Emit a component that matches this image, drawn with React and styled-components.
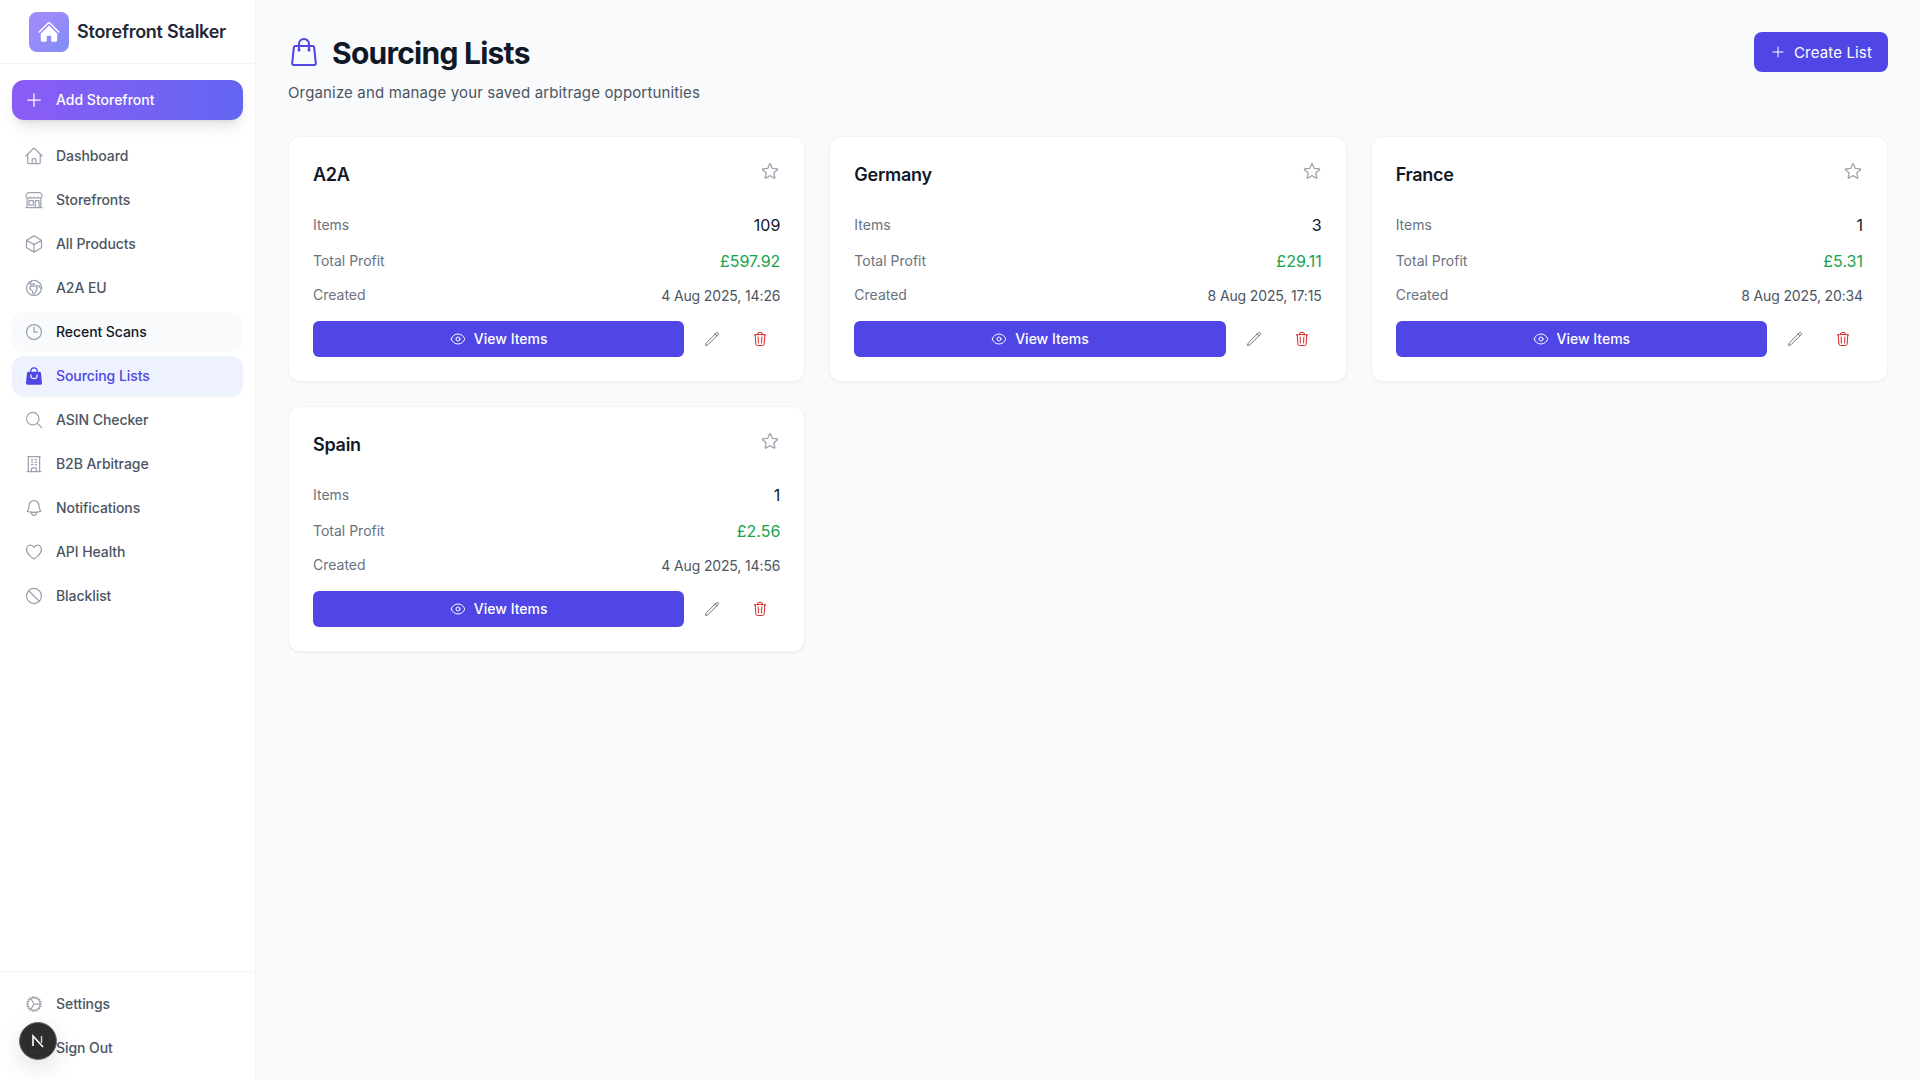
import React from "react";
import styled, { createGlobalStyle } from "styled-components";
import {
  HiHome,
  HiShoppingBag,
  HiOutlineHome,
  HiOutlineBuildingStorefront,
  HiOutlineCube,
  HiOutlineGlobeEuropeAfrica,
  HiOutlineClock,
  HiOutlineMagnifyingGlass,
  HiOutlineBuildingOffice,
  HiOutlineBell,
  HiOutlineHeart,
  HiOutlineNoSymbol,
  HiOutlineCog,
  HiOutlineArrowRightOnRectangle,
  HiOutlineShoppingBag,
  HiOutlineStar,
  HiOutlineEye,
  HiOutlinePencil,
  HiOutlineTrash,
  HiOutlinePlus,
} from "react-icons/hi2";

const GlobalStyle = createGlobalStyle`
  * { box-sizing: border-box; }
  html, body { margin: 0; height: 100%; }
  body {
    font-family: Inter, "Liberation Sans", sans-serif;
    background: #f9fafb;
    color: #111827;
  }
`;

const Layout = styled.div`
  display: flex;
  height: 100vh;
  overflow: hidden;
`;

const Sidebar = styled.aside`
  width: 256px;
  flex-shrink: 0;
  display: flex;
  flex-direction: column;
  background: #fff;
  border-right: 1px solid #f3f4f6;
`;

const Brand = styled.div`
  height: 64px;
  display: flex;
  align-items: center;
  justify-content: center;
  gap: 8px;
  border-bottom: 1px solid #f3f4f6;
`;

const BrandMark = styled.div`
  width: 40px;
  height: 40px;
  border-radius: 8px;
  display: flex;
  align-items: center;
  justify-content: center;
  color: #fff;
  font-size: 24px;
  background: linear-gradient(135deg, #a78bfa, #818cf8);
`;

const BrandName = styled.span`
  font-size: 18px;
  font-weight: 600;
  letter-spacing: -0.015em;
  color: #1f2937;
`;

const AddButton = styled.button`
  margin: 16px 12px 0;
  height: 40px;
  display: flex;
  align-items: center;
  gap: 12px;
  padding: 0 12px;
  border: none;
  border-radius: 12px;
  color: #fff;
  font: 450 14px Inter, sans-serif;
  background: linear-gradient(90deg, #8b5cf6, #6366f1);
  box-shadow: 0 10px 15px -3px rgba(0, 0, 0, 0.1), 0 4px 6px -4px rgba(0, 0, 0, 0.1);
  svg { font-size: 20px; }
`;

const NavList = styled.nav`
  flex: 1;
  display: flex;
  flex-direction: column;
  gap: 4px;
  padding: 16px 12px;
`;

const NavItem = styled.a`
  height: 40px;
  display: flex;
  align-items: center;
  gap: 12px;
  padding: 0 12px;
  border-radius: 12px;
  font-size: 14px;
  font-weight: 450;
  letter-spacing: -0.005em;
  color: ${(p) => (p.$active ? "#4f46e5" : p.$hover ? "#111827" : "#4b5563")};
  background: ${(p) => (p.$active ? "#eef2ff" : p.$hover ? "#f9fafb" : "transparent")};
  box-shadow: ${(p) => (p.$active ? "0 1px 2px rgba(0, 0, 0, 0.05)" : "none")};
  svg {
    font-size: 20px;
    flex-shrink: 0;
    color: ${(p) => (p.$active ? "#4f46e5" : "#9ca3af")};
  }
`;

const Label = styled.span`
  padding-bottom: 2px;
`;

const SidebarFoot = styled.div`
  display: flex;
  flex-direction: column;
  gap: 4px;
  padding: 12px;
  border-top: 1px solid #f3f4f6;
`;

const DevBadge = styled.div`
  position: fixed;
  left: 19px;
  bottom: 20px;
  width: 38px;
  height: 38px;
  border-radius: 50%;
  background: rgba(28, 28, 28, 0.92);
  border: 1px solid #6b6b6b;
  display: flex;
  align-items: center;
  justify-content: center;
  box-shadow: 0 8px 24px rgba(0, 0, 0, 0.12);
`;

const Main = styled.main`
  flex: 1;
  min-width: 0;
  padding: 32px;
`;

const PageHead = styled.header`
  display: flex;
  align-items: flex-start;
  justify-content: space-between;
  height: 72px;
  margin-bottom: 32px;
`;

const TitleRow = styled.div`
  display: flex;
  align-items: center;
  gap: 12px;
  color: #4f46e5;
  svg { font-size: 32px; }
`;

const Title = styled.h1`
  margin: 1px 0 -1px;
  font-size: 30px;
  line-height: 40px;
  font-weight: 700;
  letter-spacing: -0.025em;
  color: #111827;
`;

const Subtitle = styled.p`
  margin: 9px 0 0;
  font-size: 15px;
  line-height: 24px;
  letter-spacing: 0.15px;
  color: #4b5563;
`;

const CreateButton = styled.button`
  height: 40px;
  display: flex;
  align-items: center;
  gap: 8px;
  padding: 0 16px;
  border: none;
  border-radius: 8px;
  background: #4f46e5;
  color: #fff;
  font: 400 15px Inter, sans-serif;
  letter-spacing: 0.15px;
  svg { font-size: 16px; }
`;

const Grid = styled.div`
  display: grid;
  grid-template-columns: repeat(3, 1fr);
  gap: 24px;
  align-items: start;
`;

const Card = styled.article`
  height: 246px;
  padding: 24px;
  background: #fff;
  border: 1px solid #f3f4f6;
  border-radius: 12px;
  box-shadow: 0 1px 2px rgba(0, 0, 0, 0.05);
`;

const CardHead = styled.div`
  display: flex;
  justify-content: space-between;
  height: 40px;
  margin-bottom: 6px;
`;

const CardName = styled.h3`
  margin: 0;
  padding-top: 1px;
  font-size: 18px;
  line-height: 26px;
  font-weight: 600;
  letter-spacing: -0.015em;
  color: #111827;
`;

const StarButton = styled.span`
  color: #9ca3af;
  font-size: 20px;
  line-height: 1;
`;

const Row = styled.div`
  display: flex;
  align-items: center;
  justify-content: space-between;
  height: ${(p) => p.$h}px;
  font-size: 14px;
  color: #6b7280;
`;

const Value = styled.span`
  font-size: ${(p) => (p.$small ? 14 : 16)}px;
  font-weight: 400;
  letter-spacing: ${(p) => (p.$small ? "-0.01em" : "0")};
  color: ${(p) => p.$color};
`;

const Actions = styled.div`
  display: flex;
  align-items: center;
  gap: 8px;
  margin-top: 10px;
`;

const ViewButton = styled.button`
  flex: 1;
  height: 36px;
  display: flex;
  align-items: center;
  justify-content: center;
  gap: 8px;
  border: none;
  border-radius: 6px;
  background: #4f46e5;
  color: #fff;
  font: 450 14px Inter, sans-serif;
  svg { font-size: 16px; }
`;

const IconButton = styled.span`
  width: 40px;
  height: 36px;
  display: flex;
  align-items: center;
  justify-content: center;
  font-size: 16px;
  color: ${(p) => (p.$danger ? "#dc2626" : "#6b7280")};
`;

const navItems = [
  { label: "Dashboard", icon: HiOutlineHome },
  { label: "Storefronts", icon: HiOutlineBuildingStorefront },
  { label: "All Products", icon: HiOutlineCube },
  { label: "A2A EU", icon: HiOutlineGlobeEuropeAfrica },
  { label: "Recent Scans", icon: HiOutlineClock, hover: true },
  { label: "Sourcing Lists", icon: HiShoppingBag, active: true },
  { label: "ASIN Checker", icon: HiOutlineMagnifyingGlass },
  { label: "B2B Arbitrage", icon: HiOutlineBuildingOffice },
  { label: "Notifications", icon: HiOutlineBell },
  { label: "API Health", icon: HiOutlineHeart },
  { label: "Blacklist", icon: HiOutlineNoSymbol },
];

const lists = [
  { name: "A2A", items: "109", profit: "£597.92", created: "4 Aug 2025, 14:26" },
  { name: "Germany", items: "3", profit: "£29.11", created: "8 Aug 2025, 17:15" },
  { name: "France", items: "1", profit: "£5.31", created: "8 Aug 2025, 20:34" },
  { name: "Spain", items: "1", profit: "£2.56", created: "4 Aug 2025, 14:56" },
];

const ListCard = ({ list }) => (
  <Card>
    <CardHead>
      <CardName>{list.name}</CardName>
      <StarButton>
        <HiOutlineStar />
      </StarButton>
    </CardHead>
    <Row $h={36}>
      <Label>Items</Label>
      <Value $color="#111827">{list.items}</Value>
    </Row>
    <Row $h={36}>
      <Label>Total Profit</Label>
      <Value $color="#16a34a">{list.profit}</Value>
    </Row>
    <Row $h={32}>
      <Label>Created</Label>
      <Value $small $color="#4b5563">{list.created}</Value>
    </Row>
    <Actions>
      <ViewButton>
        <HiOutlineEye />
        <Label>View Items</Label>
      </ViewButton>
      <IconButton>
        <HiOutlinePencil />
      </IconButton>
      <IconButton $danger>
        <HiOutlineTrash />
      </IconButton>
    </Actions>
  </Card>
);

export default function App() {
  return (
    <Layout>
      <GlobalStyle />
      <Sidebar>
        <Brand>
          <BrandMark>
            <HiHome />
          </BrandMark>
          <BrandName>Storefront Stalker</BrandName>
        </Brand>
        <AddButton>
          <HiOutlinePlus />
          <Label>Add Storefront</Label>
        </AddButton>
        <NavList>
          {navItems.map(({ label, icon: Icon, active, hover }) => (
            <NavItem key={label} $active={active} $hover={hover}>
              <Icon />
              <Label>{label}</Label>
            </NavItem>
          ))}
        </NavList>
        <SidebarFoot>
          <NavItem>
            <HiOutlineCog />
            <Label>Settings</Label>
          </NavItem>
          <NavItem>
            <HiOutlineArrowRightOnRectangle />
            <Label>Sign Out</Label>
          </NavItem>
        </SidebarFoot>
      </Sidebar>
      <Main>
        <PageHead>
          <div>
            <TitleRow>
              <HiOutlineShoppingBag />
              <Title>Sourcing Lists</Title>
            </TitleRow>
            <Subtitle>Organize and manage your saved arbitrage opportunities</Subtitle>
          </div>
          <CreateButton>
            <HiOutlinePlus />
            Create List
          </CreateButton>
        </PageHead>
        <Grid>
          {lists.map((list) => (
            <ListCard key={list.name} list={list} />
          ))}
        </Grid>
      </Main>
      <DevBadge>
        <svg width="16" height="16" viewBox="0 0 16 16" fill="none">
          <path d="M3 13V3L13 14" stroke="#fff" strokeWidth="1.6" />
          <path d="M11.5 3v7" stroke="#ddd" strokeWidth="1.4" />
        </svg>
      </DevBadge>
    </Layout>
  );
}
